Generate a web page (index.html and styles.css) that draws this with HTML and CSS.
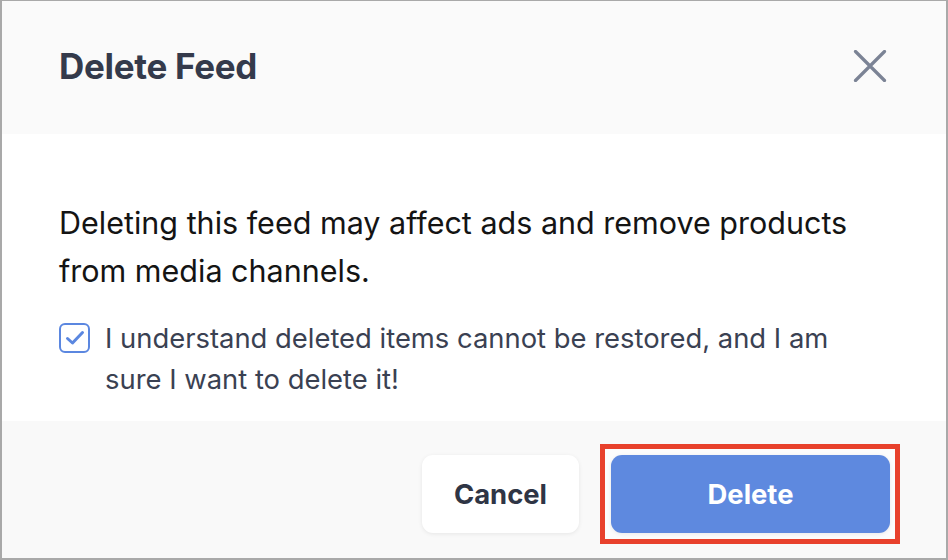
FILE: index.html
```html
<!DOCTYPE html>
<html>
<head>
<meta charset="utf-8">
<link rel="stylesheet" href="styles.css">
</head>
<body>
<div class="frame">
  <div class="header">
    <h1 class="title">Delete Feed</h1>
    <button class="close" aria-label="Close">
      <svg width="34" height="32" viewBox="0 0 34 32"><path d="M2.5 1.5 L31.5 30.5 M31.5 1.5 L2.5 30.5" stroke="#7b8395" stroke-width="3.2" stroke-linecap="round" fill="none"/></svg>
    </button>
  </div>
  <div class="content">
    <p class="message">Deleting this feed may affect ads and remove products from media channels.</p>
    <label class="confirm">
      <span class="checkbox">
        <svg width="20" height="16" viewBox="0 0 20 16"><path d="M2.5 8.5 L7.5 13 L17.5 2.5" stroke="#5b87e0" stroke-width="3" stroke-linecap="round" stroke-linejoin="round" fill="none"/></svg>
      </span>
      <span class="confirm-text">I understand deleted items cannot be restored, and I am sure I want to delete it!</span>
    </label>
  </div>
  <div class="footer">
    <button class="btn btn-cancel">Cancel</button>
    <div class="highlight">
      <button class="btn btn-delete">Delete</button>
    </div>
  </div>
</div>
</body>
</html>
```

FILE: styles.css
```css
* { box-sizing: border-box; }
html, body { margin: 0; padding: 0; }
body {
  width: 948px;
  height: 560px;
  font-family: Inter, "Liberation Sans", sans-serif;
  background: #ffffff;
}
.frame {
  width: 948px;
  height: 560px;
  border-style: solid;
  border-color: #a9a9a9;
  border-width: 1px 2px 2px 2px;
  display: flex;
  flex-direction: column;
  overflow: hidden;
}
.header {
  height: 133px;
  flex: none;
  background: #fafafa;
  display: flex;
  align-items: center;
  justify-content: space-between;
  padding: 0 59px 4px 57px;
}
.title {
  margin: 0;
  font-size: 35px;
  font-weight: 700;
  color: #343a4b;
  letter-spacing: -0.3px;
}
.close {
  border: 0;
  background: transparent;
  padding: 0;
  width: 34px;
  height: 32px;
  display: flex;
}
.content {
  flex: none;
  height: 287px;
  background: #ffffff;
  padding: 65px 57px 0 57px;
}
.message {
  margin: 0;
  font-size: 30.5px;
  line-height: 48px;
  color: #141414;
  width: 830px;
}
.confirm {
  margin-top: 23px;
  display: flex;
  align-items: flex-start;
}
.checkbox {
  flex: none;
  width: 31px;
  height: 30px;
  border: 2px solid #5b87e0;
  border-radius: 6px;
  margin-top: 5px;
  display: flex;
  align-items: center;
  justify-content: center;
}
.confirm-text {
  margin-left: 15px;
  font-size: 27.4px;
  line-height: 41px;
  color: #3a4152;
  width: 760px;
}
.footer {
  flex: 1;
  background: #f9f9f9;
  display: flex;
  align-items: center;
  justify-content: flex-end;
  padding: 8px 46px 0 0;
}
.btn {
  font-family: Inter, "Liberation Sans", sans-serif;
  font-size: 27.4px;
  font-weight: 700;
  height: 78px;
  border: 0;
  border-radius: 11px;
  padding: 0;
}
.btn-cancel {
  width: 157px;
  background: #ffffff;
  color: #2f3545;
  box-shadow: 0 1px 4px rgba(0,0,0,0.08);
  margin-right: 21px;
}
.highlight {
  border: 5px solid #e8412c;
  padding: 6px 5px 6px 6px;
  background: #fcfcfc;
}
.btn-delete {
  width: 279px;
  background: #5e89df;
  color: #ffffff;
  display: block;
  box-shadow: 0 1px 4px rgba(0,0,0,0.08);
}
```
